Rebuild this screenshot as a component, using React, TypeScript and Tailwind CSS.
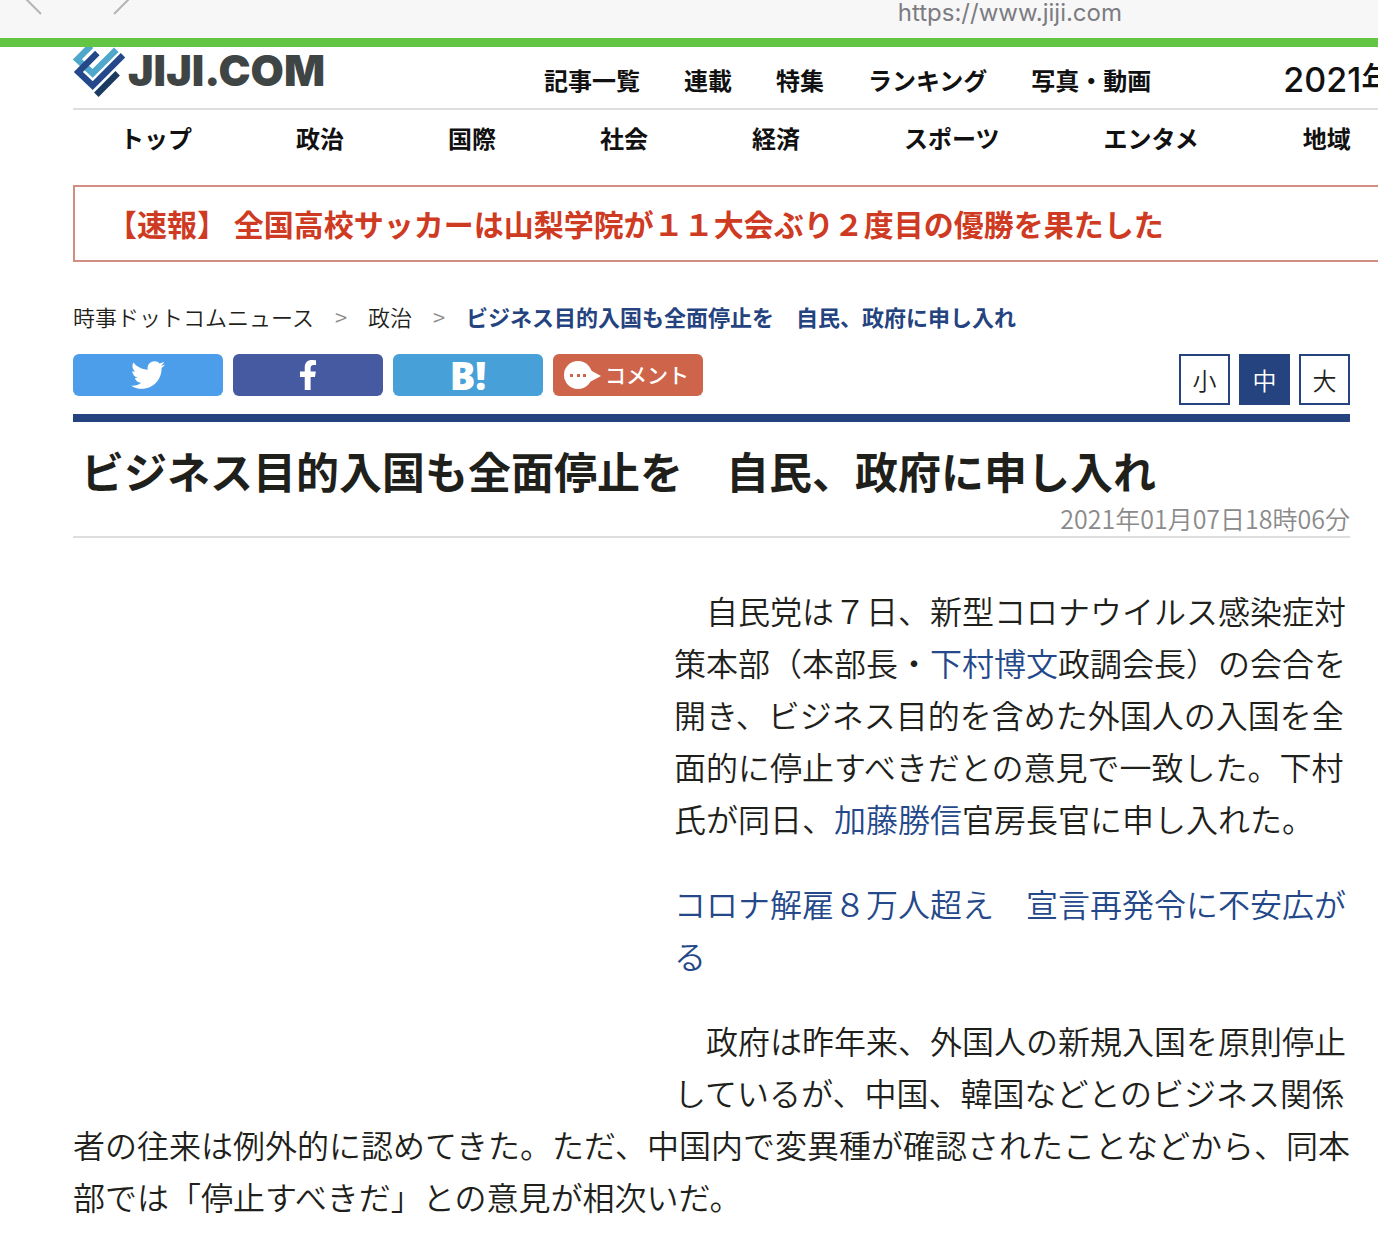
import { ReactNode } from "react";
import { FaFacebookF, FaTwitter } from "react-icons/fa";

const SITE_LINKS = ["記事一覧", "連載", "特集", "ランキング", "写真・動画"];

const CATEGORIES = ["トップ", "政治", "国際", "社会", "経済", "スポーツ", "エンタメ", "地域"];

const TEXT_SIZES = ["小", "中", "大"];

export default function App() {
  return (
    <div className="min-h-screen overflow-hidden bg-white font-['Noto_Sans_CJK_JP',sans-serif] font-[350] text-[#1f1f1c]">
      <BrowserBar />
      <div className="pl-[73px]">
        <SiteHeader />
        <BreakingNews />
      </div>
      <main className="pl-[73px] pr-7">
        <Breadcrumb />
        <div className="mt-[22px] flex items-start justify-between">
          <ShareButtons />
          <TextSizePicker />
        </div>
        <Article />
      </main>
    </div>
  );
}

function BrowserBar() {
  return (
    <div className="flex h-[47px] items-start border-b-9 border-[#62c544] bg-[#f7f7f7]">
      <div className="flex flex-1 gap-[70px] pl-[25px] text-[#b4b4b8]">
        <button type="button" aria-label="戻る">
          <svg className="block" width="18" height="15" viewBox="0 0 18 15" fill="none" stroke="currentColor" strokeWidth="2">
            <path d="M0 -2L16 14" />
          </svg>
        </button>
        <button type="button" aria-label="進む">
          <svg className="block" width="18" height="15" viewBox="0 0 18 15" fill="none" stroke="currentColor" strokeWidth="2">
            <path d="M17 -2L1 14" />
          </svg>
        </button>
      </div>
      <p className="pr-64 font-['Inter',sans-serif] text-2xl leading-[26px] font-normal text-[#7c7c82]">https://www.jiji.com</p>
    </div>
  );
}

function SiteHeader() {
  return (
    <header className="font-bold whitespace-nowrap text-[#111]">
      <div className="flex h-[63px] items-start border-b-2 border-[#dedede]">
        <a href="#" className="flex w-[471px] shrink-0 items-start">
          <LogoMark />
          <span className="font-['Inter',sans-serif] text-[43px] leading-[47px] font-black text-[#3f4545]">JIJI.COM</span>
        </a>
        <nav className="flex gap-11 text-2xl leading-[66px]">
          {SITE_LINKS.map((label) => (
            <a key={label} href="#">
              {label}
            </a>
          ))}
        </nav>
        <p className="ml-[132px] font-['Inter','Noto_Sans_CJK_JP',sans-serif] text-[34px] leading-[66px] font-medium">2021年01月11日</p>
      </div>
      <nav className="flex gap-[104px] pl-[47px] text-2xl leading-[56px]">
        {CATEGORIES.map((label) => (
          <a key={label} href="#">
            {label}
          </a>
        ))}
      </nav>
    </header>
  );
}

function LogoMark() {
  return (
    <svg className="mr-[3px] block" width="52" height="50" viewBox="0 0 156 150" fill="none" strokeWidth="19" aria-hidden="true">
      <path d="M54 -4L13 37L59 79L130 8" stroke="#4fa8cc" />
      <path d="M73 18L16 75L59 116L150 25" stroke="#24488a" />
      <path d="M70 143L134 79" stroke="#1b3a5f" />
    </svg>
  );
}

function BreakingNews() {
  return (
    <div className="mt-[19px] -mr-1 border-2 border-[#d28e82] pl-8">
      <a href="#" className="block text-3xl leading-[73px] font-bold whitespace-nowrap text-[#cf3a22]">
        【速報】 全国高校サッカーは山梨学院が１１大会ぶり２度目の優勝を果たした
      </a>
    </div>
  );
}

function Breadcrumb() {
  return (
    <nav className="mt-[38px] flex text-[22px] leading-8 whitespace-nowrap">
      <a href="#">時事ドットコムニュース</a>
      <Separator />
      <a href="#">政治</a>
      <Separator />
      <a href="#" className="font-bold text-[#24437f]">
        ビジネス目的入国も全面停止を　自民、政府に申し入れ
      </a>
    </nav>
  );
}

function Separator() {
  return <span className="px-[21px] text-[#8a8a8a]">&gt;</span>;
}

function ShareButtons() {
  return (
    <div className="flex gap-[10px] text-white">
      <button type="button" aria-label="Twitter" className="flex h-[42px] w-[150px] items-center justify-center rounded-md bg-[#4d9eea]">
        <FaTwitter size={34} />
      </button>
      <button type="button" aria-label="Facebook" className="flex h-[42px] w-[150px] items-center justify-center rounded-md bg-[#465aa2]">
        <FaFacebookF size={30} />
      </button>
      <button
        type="button"
        className="flex h-[42px] w-[150px] items-center justify-center rounded-md bg-[#48a0d8] font-['Open_Sans',sans-serif] text-[38px] leading-[42px] font-extrabold"
      >
        B!
      </button>
      <button
        type="button"
        className="flex h-[42px] w-[150px] items-center justify-center gap-1 rounded-md bg-[#ce644a] pr-1 text-[21px] font-medium"
      >
        <CommentIcon />
        コメント
      </button>
    </div>
  );
}

function CommentIcon() {
  return (
    <svg width="38" height="30" viewBox="0 0 38 30" aria-hidden="true">
      <circle cx="15" cy="15" r="14" fill="#fff" />
      <path d="M27 10L38 16L25 23Z" fill="#fff" />
      <g fill="#ce644a">
        <rect x="7" y="14" width="3" height="3" />
        <rect x="14" y="14" width="3" height="3" />
        <rect x="20" y="14" width="3" height="3" />
      </g>
    </svg>
  );
}

function TextSizePicker() {
  return (
    <div className="flex gap-[9px] text-2xl">
      {TEXT_SIZES.map((size) => (
        <button
          key={size}
          type="button"
          aria-pressed={size === "中"}
          className="size-[51px] border-2 border-[#24437f] aria-pressed:bg-[#24437f] aria-pressed:text-white"
        >
          {size}
        </button>
      ))}
    </div>
  );
}

function Article() {
  return (
    <article className="mt-[9px] border-t-8 border-[#24437f]">
      <div className="border-b-2 border-[#dedede]">
        <h1 className="pt-[18px] pl-2 text-[43px] leading-[60px] font-bold whitespace-nowrap">
          ビジネス目的入国も全面停止を　自民、政府に申し入れ
        </h1>
        <p className="text-right text-[25px] leading-9 text-[#8a8a8a]">2021年01月07日18時06分</p>
      </div>
      <div className="mt-[46px] -mr-1 text-[32px] leading-[52px]">
        <div className="float-left h-[510px] w-[601px]" />
        <p className="mb-[33px] indent-8">
          自民党は７日、新型コロナウイルス感染症対策本部（本部長・<TextLink>下村博文</TextLink>
          政調会長）の会合を開き、ビジネス目的を含めた外国人の入国を全面的に停止すべきだとの意見で一致した。下村氏が同日、
          <TextLink>加藤勝信</TextLink>官房長官に申し入れた。
        </p>
        <p className="mb-[33px]">
          <TextLink>コロナ解雇８万人超え　宣言再発令に不安広がる</TextLink>
        </p>
        <p className="indent-8">
          政府は昨年来、外国人の新規入国を原則停止しているが、中国、韓国などとのビジネス関係者の往来は例外的に認めてきた。ただ、中国内で変異種が確認されたことなどから、同本部では「停止すべきだ」との意見が相次いだ。
        </p>
      </div>
    </article>
  );
}

function TextLink({ children }: { children: ReactNode }) {
  return (
    <a href="#" className="text-[#24488a]">
      {children}
    </a>
  );
}
